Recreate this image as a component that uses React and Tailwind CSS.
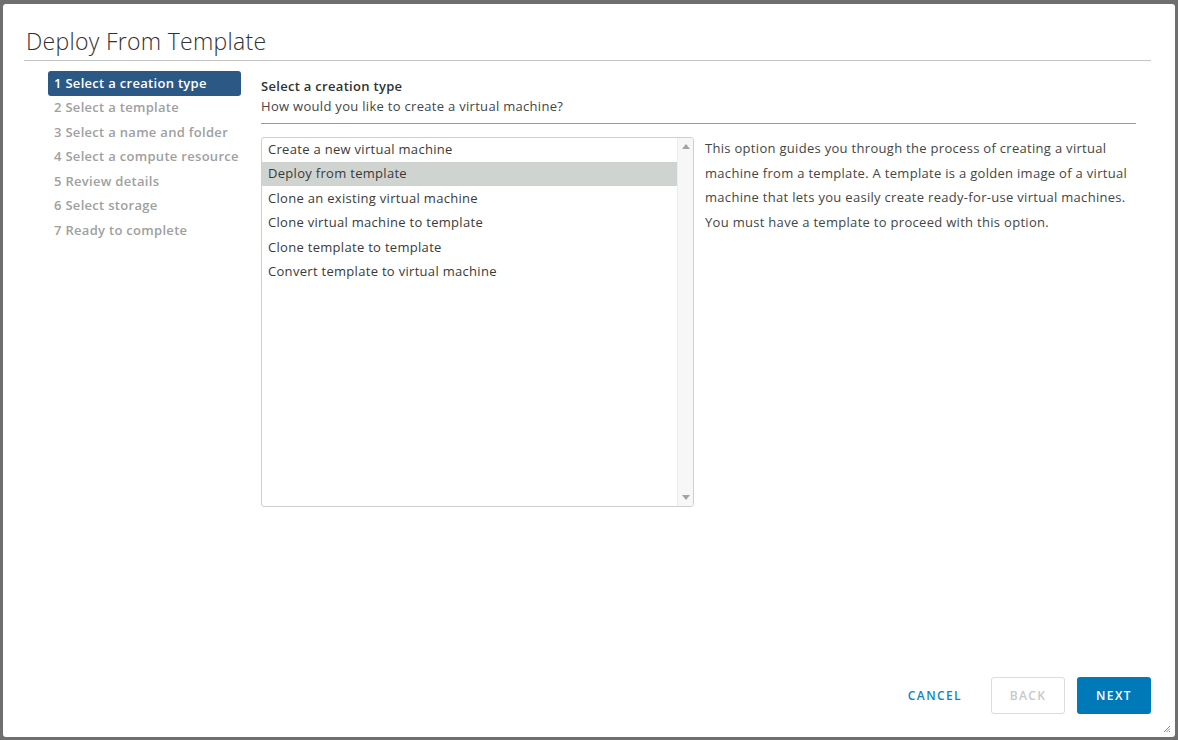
import { useState } from 'react';

const steps = [
  '1 Select a creation type',
  '2 Select a template',
  '3 Select a name and folder',
  '4 Select a compute resource',
  '5 Review details',
  '6 Select storage',
  '7 Ready to complete',
];

const options = [
  'Create a new virtual machine',
  'Deploy from template',
  'Clone an existing virtual machine',
  'Clone virtual machine to template',
  'Clone template to template',
  'Convert template to virtual machine',
];

const App = () => {
  const [selected, setSelected] = useState(1);

  return (
    <div className="w-[1178px] h-[740px] bg-[#6f6f6f] pt-[4px] pl-[3px] pr-[3px] pb-[3px] font-['Open_Sans',sans-serif]">
      <div className="relative flex flex-col h-full bg-white rounded-[3px] pl-[21px] pr-[24px]">
        {/* Header */}
        <div className="pt-[23px] pb-[5px] border-b border-[#c4c4c4]">
          <h1 className="text-[23px] leading-[28px] font-light text-[#313131] pl-[2px] tracking-[0.3px]">Deploy From Template</h1>
        </div>

        <div className="flex flex-1 pt-[10px]">
          {/* Steps */}
          <div className="w-[193px] ml-[24px] flex flex-col">
            {steps.map((s, i) => (
              <div
                key={s}
                className={`h-[24.5px] flex items-center px-[6px] rounded-[3px] text-[13px] font-semibold whitespace-nowrap tracking-[0.3px] ${
                  i === 0 ? 'bg-[#2c5885] text-white' : 'text-[#a0a0a0]'
                }`}
              >
                {s}
              </div>
            ))}
          </div>

          {/* Content */}
          <div className="flex-1 ml-[20px] mr-[15px] pt-[3px] tracking-[0.3px]">
            <div className="text-[13px] font-semibold text-[#313131] leading-[20px] pt-[2px]">Select a creation type</div>
            <div className="text-[13px] text-[#454545] leading-[20px] pb-[7px] border-b border-[#9a9a9a]">
              How would you like to create a virtual machine?
            </div>

            <div className="flex mt-[13px]">
              <div className="relative w-[433px] h-[370px] border border-[#cfcfcf] rounded-[3px] flex overflow-hidden">
                <div className="flex-1 -mt-[1px]">
                  {options.map((o, i) => (
                    <div
                      key={o}
                      onClick={() => setSelected(i)}
                      className={`h-[24.5px] flex items-center px-[6px] text-[13px] text-[#3a3a3a] cursor-pointer ${
                        selected === i ? 'bg-[#d0d4d0]' : ''
                      }`}
                    >
                      {o}
                    </div>
                  ))}
                </div>
                <div className="w-[16px] bg-[#f7f7f7] border-l border-[#ededed] flex flex-col justify-between items-center py-[6px]">
                  <svg width="8" height="5" viewBox="0 0 8 5"><path d="M0 5L4 0L8 5Z" fill="#a3a3a3" /></svg>
                  <svg width="8" height="5" viewBox="0 0 8 5"><path d="M0 0L8 0L4 5Z" fill="#a3a3a3" /></svg>
                </div>
              </div>

              <div className="ml-[11px] -mt-[1px] flex-1 text-[13px] leading-[24.5px] text-[#454545]">
                This option guides you through the process of creating a virtual machine from a template. A template is a golden image of a virtual machine that lets you easily create ready-for-use virtual machines. You must have a template to proceed with this option.
              </div>
            </div>
          </div>
        </div>

        {/* Footer */}
        <div className="flex justify-end items-center gap-[12px] pb-[23px]">
          <button className="h-[37px] px-[17px] text-[12px] font-semibold tracking-[1.4px] text-[#0f86c4]">CANCEL</button>
          <button className="h-[37px] w-[74px] border border-[#dcdcdc] rounded-[3px] text-[12px] font-semibold tracking-[1.4px] text-[#c8c8c8]">BACK</button>
          <button className="h-[37px] w-[74px] bg-[#0079b8] rounded-[3px] text-[12px] font-semibold tracking-[1.4px] text-white">NEXT</button>
        </div>

        {/* resize grip */}
        <svg className="absolute right-[4px] bottom-[4px]" width="8" height="8" viewBox="0 0 8 8">
          <path d="M7 1L1 7M7 3.5L3.5 7M7 6L6 7" stroke="#8a8a8a" strokeWidth="1" />
        </svg>
      </div>
    </div>
  );
};

export default App;
